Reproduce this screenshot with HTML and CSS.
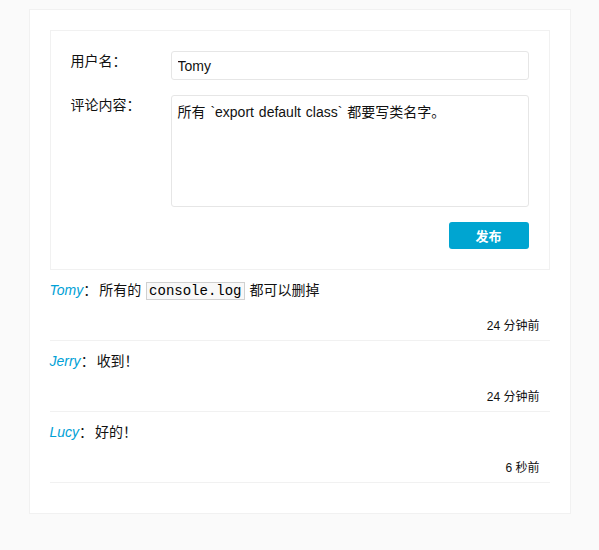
FILE: index.html
```html
<!DOCTYPE html>
<html lang="zh">
<head>
<meta charset="utf-8">
<link rel="stylesheet" href="styles.css">
</head>
<body>
<div class="wrapper">
  <div class="comment-input">
    <div class="field">
      <span class="field-name">用户名：</span>
      <div class="field-input"><input class="text-input" type="text" value="Tomy"></div>
    </div>
    <div class="field">
      <span class="field-name">评论内容：</span>
      <div class="field-input"><textarea class="text-area">所有 `export default class` 都要写类名字。</textarea></div>
    </div>
    <div class="field-button">
      <button class="btn">发布</button>
    </div>
  </div>
  <div class="comment-list">
    <div class="comment">
      <div class="comment-user"><span class="user">Tomy</span>：<span class="content">所有的 <code>console.log</code> 都可以删掉</span></div>
      <div class="comment-time">24 分钟前</div>
    </div>
    <div class="comment">
      <div class="comment-user"><span class="user">Jerry</span>：<span class="content">收到！</span></div>
      <div class="comment-time">24 分钟前</div>
    </div>
    <div class="comment">
      <div class="comment-user"><span class="user">Lucy</span>：<span class="content">好的！</span></div>
      <div class="comment-time">6 秒前</div>
    </div>
  </div>
</div>
</body>
</html>
```
FILE: styles.css
```css
html, body {
  margin: 0;
  padding: 0;
}
body {
  background: #fafafa;
  font-family: "Liberation Sans", "Noto Sans CJK SC", sans-serif;
  font-size: 14px;
  color: #111;
}
.wrapper {
  width: 500px;
  margin: 9px auto 0;
  padding: 20px;
  background: #fff;
  border: 1px solid #f1f1f1;
  padding-bottom: 30px;
}
.comment-input {
  border: 1px solid #f1f1f1;
  padding: 20px;
  background: #fff;
}
.field {
  display: flex;
  margin-bottom: 15px;
}
.field-name {
  width: 100px;
  line-height: 20px;
  flex: none;
}
.field-input {
  flex: 1;
}
.text-input, .text-area {
  display: block;
  box-sizing: border-box;
  width: 100%;
  border: 1px solid #e6e6e6;
  border-radius: 3px;
  font-family: "Liberation Sans", "Noto Sans CJK SC", sans-serif;
  font-size: 14px;
  color: #111;
  outline: none;
  background: #fff;
}
.text-input {
  height: 29px;
  padding: 0 6px;
}
.text-area {
  height: 112px;
  padding: 6px;
  resize: none;
  line-height: 20px;
  word-spacing: 1px;
}
.field-button {
  display: flex;
  justify-content: flex-end;
}
.btn {
  width: 80px;
  height: 27px;
  border: none;
  border-radius: 3px;
  background: #00a5d1;
  color: #fff;
  font-family: "Liberation Sans", "Noto Sans CJK SC", sans-serif;
  font-size: 13px;
  font-weight: bold;
  padding: 0;
}
.comment {
  border-bottom: 1px solid #f1f1f1;
  padding: 10px 0 5px;
}
.comment-user {
  line-height: 20px;
  height: 20px;
}
.user {
  color: #00a1d6;
  font-style: italic;
}
.content {
  margin-left: 2px;
}
code {
  font-family: "Liberation Mono", monospace;
  font-size: 14px;
  border: 1px solid #d0d0d0;
  background: #f8f8f8;
  padding: 0 2px;
  color: #000;
  margin: 0 1px;
}
.comment-time {
  margin-top: 17px;
  line-height: 18px;
  font-size: 12px;
  text-align: right;
  padding-right: 10px;
}
```
